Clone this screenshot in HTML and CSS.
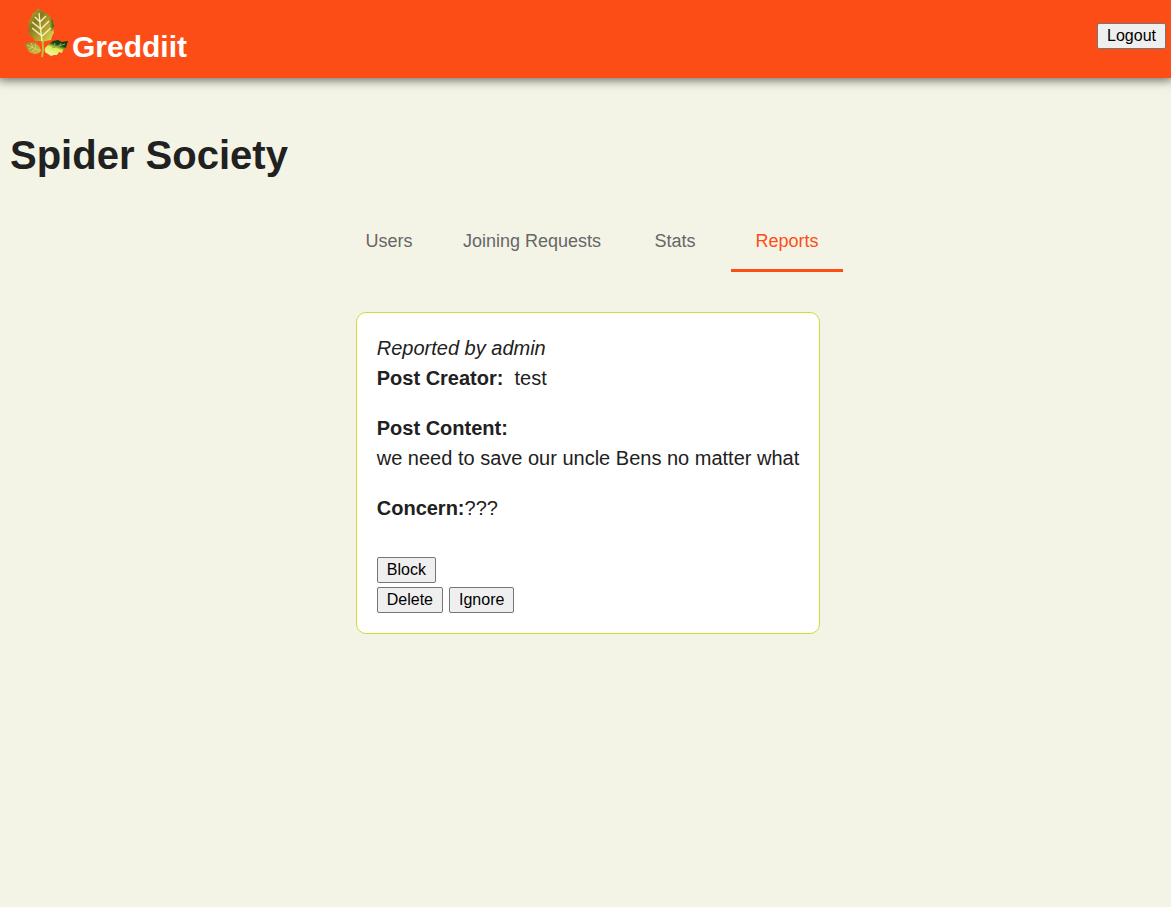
FILE: index.html
```html
<!DOCTYPE html>
<html lang="en">
<head>
<meta charset="utf-8">
<title>Greddiit</title>
<meta name="viewport" content="width=device-width, initial-scale=1">
<link rel="stylesheet" href="styles.css">
</head>
<body>
<header class="navbar">
  <div class="brand">
    <svg class="logo" viewBox="0 0 46 50" width="46" height="50" aria-hidden="true">
      <defs>
        <linearGradient id="leaf" x1="0" y1="0" x2="1" y2="1">
          <stop offset="0" stop-color="#c8b13a"/>
          <stop offset=".35" stop-color="#857a1e"/>
          <stop offset=".65" stop-color="#b5a42e"/>
          <stop offset="1" stop-color="#dfe85a"/>
        </linearGradient>
        <linearGradient id="edge" x1="0" y1="0" x2="1" y2="0">
          <stop offset=".4" stop-color="#3f6a10" stop-opacity="0"/>
          <stop offset="1" stop-color="#1c4a0c"/>
        </linearGradient>
        <linearGradient id="small" x1="0" y1="0" x2="1" y2="1">
          <stop offset="0" stop-color="#8d8420"/>
          <stop offset="1" stop-color="#d6c94a"/>
        </linearGradient>
        <linearGradient id="dark" x1=".75" y1="0" x2=".35" y2=".9">
          <stop offset="0" stop-color="#04360c"/>
          <stop offset=".35" stop-color="#1d4a10"/>
          <stop offset=".6" stop-color="#dcea50"/>
          <stop offset="1" stop-color="#f5f59a"/>
        </linearGradient>
      </defs>
      <path d="M18 30 Q20 40 18 49" fill="none" stroke="#cdb936" stroke-width="2"/>
      <path d="M18 46 Q20 41 23 39" fill="none" stroke="#cdb936" stroke-width="1"/>
      <path d="M14 0 L19 4 L24 6 L26 9 L29 12 L29 15 L30 18 L29 20 L30 25 L28 28 L27 32 L22 33 L19 34 L16 33 L11 33 L9 30 L7 28 L5 27 L5 22 L4 20 L5 16 L4 14 L7 10 L8 6 L12 3Z" fill="url(#leaf)"/>
      <path d="M25 8 L29 12 L29 15 L30 18 L29 20 L28 23 L22 22Z" fill="url(#edge)"/>
      <path d="M15 5 Q16 18 18 33 M11 9 L16 14 L22 8 M8 14 L17 21 L25 13 M8 20 L18 28 L27 20" fill="none" stroke="#f6f0bc" stroke-width="1.4"/>
      <path d="M0 36 L4 35 L8 34 L12 35 L15 38 L17 42 L15 45 L11 46 L7 45 L4 43 L3 40Z" fill="url(#small)"/>
      <path d="M3 37 L17 43 M7 35 L9 39 L5 41 M11 36 L12 41 L8 43" fill="none" stroke="#d8ca6c" stroke-width="1"/>
      <path d="M21 40 L25 36 L29 33 L34 32 L38 34 L44 33 L43 36 L42 40 L39 42 L38 45 L35 44 L33 47 L30 47 L27 48 L24 46 L21 44Z" fill="url(#dark)"/>
      <path d="M28 40 L41 36 M30 39 L31 35 M35 38 L37 35" fill="none" stroke="#8fae58" stroke-width="1"/>
    </svg>
    <span class="brand-name">Greddiit</span>
  </div>
  <button class="btn" type="button">Logout</button>
</header>
<main class="page">
  <h1 class="title">Spider Society</h1>
  <nav class="tabs" role="tablist" aria-label="Moderation">
    <button class="tab" type="button" role="tab" aria-selected="false">Users</button>
    <button class="tab" type="button" role="tab" aria-selected="false">Joining Requests</button>
    <button class="tab" type="button" role="tab" aria-selected="false">Stats</button>
    <button class="tab tab-active" type="button" role="tab" aria-selected="true">Reports</button>
  </nav>
  <article class="report">
    <p class="reporter">Reported by admin</p>
    <p class="field"><strong>Post Creator:</strong>&nbsp; test</p>
    <p class="field"><strong>Post Content:</strong><br>we need to save our uncle Bens no matter what</p>
    <p class="field"><strong>Concern:</strong>???</p>
    <div class="actions">
      <div class="action-row"><button class="btn" type="button">Block</button></div>
      <div class="action-row">
        <button class="btn" type="button">Delete</button>
        <button class="btn" type="button">Ignore</button>
      </div>
    </div>
  </article>
</main>
</body>
</html>
```
FILE: styles.css
```css
* {
  box-sizing: border-box;
}

body {
  margin: 0;
  min-height: 100vh;
  background: #f4f4e6;
  color: #212121;
  font-family: "Liberation Sans", Arial, sans-serif;
  font-size: 20px;
  line-height: 30px;
}

.navbar {
  display: flex;
  align-items: flex-start;
  justify-content: space-between;
  padding: 8px 5px 12px 24px;
  background: #fd4d17;
  box-shadow: 0 0 10px 2px rgba(0, 0, 0, 0.6);
}

.brand {
  display: flex;
  align-items: flex-end;
  padding-bottom: 8px;
  gap: 2px;
}

.logo {
  display: block;
}

.brand-name {
  color: #fff;
  font-size: 30px;
  font-weight: bold;
  line-height: 22px;
}

.btn {
  height: 26px;
  padding: 0 9px;
  border: 1px solid #767676;
  border-radius: 2px;
  background: #efefef;
  color: #000;
  font: 16px/20px "Liberation Sans", Arial, sans-serif;
}

.navbar .btn {
  margin-top: 15px;
}

.page {
  display: flex;
  flex-direction: column;
  align-items: center;
  padding: 52px 0 40px 5px;
}

.title {
  align-self: flex-start;
  margin: 0 0 30px;
  padding-left: 5px;
  font-size: 40px;
  line-height: 50px;
}

.tabs {
  display: flex;
  margin-bottom: 40px;
}

.tab {
  min-width: 112px;
  height: 62px;
  padding: 2px 18px 0;
  border: 0;
  border-bottom: 3px solid transparent;
  background: none;
  color: #666;
  font: 18px/24px "Liberation Sans", Arial, sans-serif;
}

.tab-active {
  border-color: #ff4d17;
  color: #ff4d17;
}

.report {
  padding: 20px;
  border: 1px solid #cddc39;
  border-radius: 10px;
  background: #fff;
}

.reporter,
.field {
  margin: 0 0 20px;
}

.reporter {
  margin-bottom: 0;
  font-style: italic;
}

.actions {
  padding-top: 10px;
}

.action-row {
  display: flex;
  align-items: flex-end;
  gap: 6px;
  height: 30px;
}
```
